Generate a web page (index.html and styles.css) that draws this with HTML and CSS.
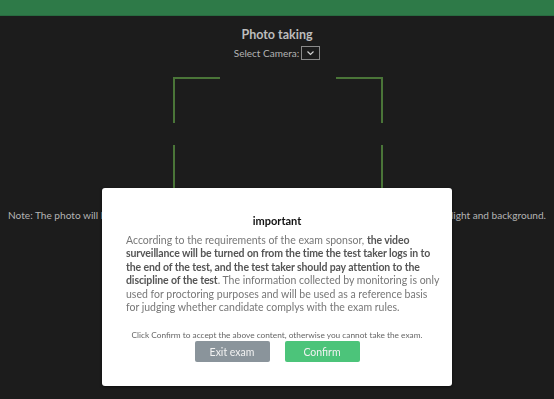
FILE: index.html
```html
<!DOCTYPE html>
<html lang="en">
<head>
    <meta charset="UTF-8">
    <meta name="viewport" content="width=device-width, initial-scale=1.0">
    <title>Photo taking</title>
    <link rel="stylesheet" href="styles.css">
</head>
<body>
    <header class="topbar"></header>
    <main class="capture">
        <h2 class="capture-title">Photo taking</h2>
        <div class="camera">
            <label for="camera">Select Camera:</label>
            <div class="camera-select">
                <svg width="9" height="6" viewBox="0 0 9 6"><path d="M1.5 1.5 L4.5 4.5 L7.5 1.5" fill="none" stroke="#cfcfcf" stroke-width="1.2"/></svg>
            </div>
        </div>
        <div class="frame">
            <span class="corner tl"></span>
            <span class="corner tr"></span>
            <span class="corner bl"></span>
            <span class="corner br"></span>
        </div>
        <p class="note">Note: The photo will be reviewed, please keep your face in the frame and pay attention to the angle, light and background.</p>
    </main>

    <div class="overlay">
        <div class="modal">
            <h3 class="modal-title">important</h3>
            <p class="modal-text">According to the requirements of the exam sponsor, <b>the video surveillance will be turned on from the time the test taker logs in to the end of the test, and the test taker should pay attention to the discipline of the test</b>. The information collected by monitoring is only used for proctoring purposes and will be used as a reference basis for judging whether candidate complys with the exam rules.</p>
            <p class="modal-hint">Click Confirm to accept the above content, otherwise you cannot take the exam.</p>
            <div class="modal-actions">
                <button class="btn btn-exit" type="button">Exit exam</button>
                <button class="btn btn-confirm" type="button">Confirm</button>
            </div>
        </div>
    </div>
</body>
</html>
```

FILE: styles.css
```css
* {
    margin: 0;
    padding: 0;
    box-sizing: border-box;
}
:root {
    --bg: #1c1c1c;
    --bar: #2e7a48;
    --frame: #4a7538;
    --muted: #b4b4b4;
    --font: Lato, "Open Sans", sans-serif;
}
body {
    background-color: var(--bg);
    font-family: var(--font);
    height: 399px;
    overflow: hidden;
}
.topbar {
    height: 16px;
    background-color: var(--bar);
    border-bottom: 1px solid #286b40;
}
.capture {
    display: flex;
    flex-direction: column;
    align-items: center;
}
.capture-title {
    margin-top: 11px;
    font-size: 12.5px;
    font-weight: 700;
    color: #bdbdbd;
    line-height: 16px;
}
.camera {
    display: flex;
    align-items: center;
    gap: 2px;
    margin-top: 3px;
    font-size: 10px;
    color: var(--muted);
}
.camera-select {
    width: 19px;
    height: 14px;
    border: 1px solid #8a8a8a;
    display: flex;
    align-items: center;
    justify-content: center;
}
.frame {
    position: relative;
    width: 210px;
    height: 114px;
    margin-top: 17px;
    margin-left: 2px;
}
.corner {
    position: absolute;
    width: 47px;
    height: 46px;
    border: 0 solid var(--frame);
}
.tl { top: 0; left: 0; border-top-width: 2px; border-left-width: 2px; }
.tr { top: 0; right: 0; border-top-width: 2px; border-right-width: 2px; }
.bl { bottom: 0; left: 0; border-bottom-width: 2px; border-left-width: 2px; }
.br { bottom: 0; right: 0; border-bottom-width: 2px; border-right-width: 2px; }
.note {
    margin-top: 18px;
    font-size: 10.1px;
    color: var(--muted);
    white-space: nowrap;
}
.overlay {
    position: fixed;
    inset: 0;
    display: flex;
    justify-content: center;
    padding-top: 188px;
}
.modal {
    width: 350px;
    height: 198px;
    background-color: #fff;
    border-radius: 3px;
    box-shadow: 0 1px 3px rgba(0, 0, 0, 0.6);
    padding: 25px 24px 0;
    text-align: center;
}
.modal-title {
    font-size: 11px;
    font-weight: 700;
    color: #111;
    line-height: 16px;
}
.modal-text {
    margin-top: 5px;
    margin-right: -12px;
    text-align: left;
    font-size: 10.5px;
    line-height: 13.4px;
    color: #777;
}
.modal-text b {
    color: #555;
    letter-spacing: -0.12px;
}
.modal-hint {
    margin-top: 15px;
    font-size: 8.3px;
    color: #666;
    line-height: 12px;
    white-space: nowrap;
}
.modal-actions {
    display: flex;
    justify-content: center;
    gap: 15px;
    margin-top: 0;
}
.btn {
    width: 75px;
    height: 21px;
    border: none;
    border-radius: 2px;
    font-family: var(--font);
    font-size: 10.5px;
    color: #f2f2f2;
}
.btn-exit {
    background-color: #8a949b;
}
.btn-confirm {
    background-color: #4cc47a;
}
```
